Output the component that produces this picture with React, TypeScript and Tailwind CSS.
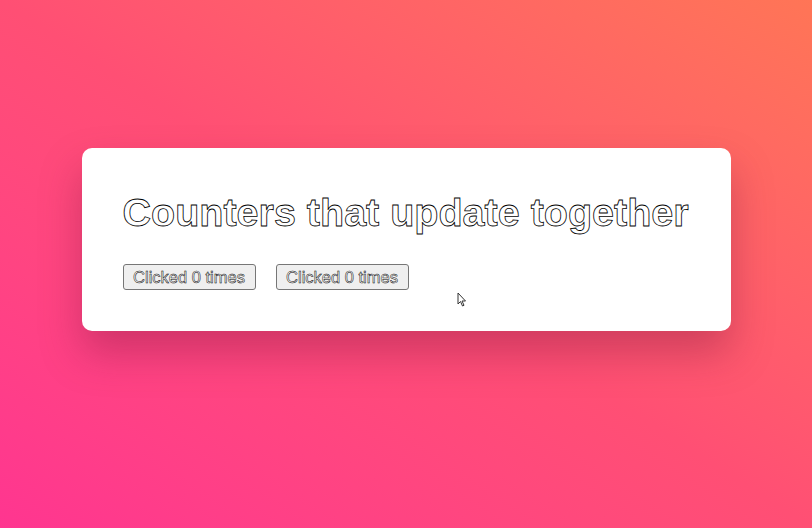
export default function App() {
  return (
    <div className="relative flex h-[528px] w-[812px] items-start justify-center overflow-hidden bg-linear-to-tr from-[#ff3590] via-[#ff4f74] to-[#ff7556] pt-[148px] font-['Liberation_Sans',Arial,sans-serif]">
      <div className="h-[183px] w-[649px] rounded-[10px] bg-white px-[41px] pt-[39px] shadow-[0_22px_40px_rgba(120,20,60,0.35)]">
        <h1 className="text-[39.5px] font-bold leading-[50px] text-white [-webkit-text-stroke:0.8px_#000]">
          Counters that update together
        </h1>
        <div className="mt-[27px] flex gap-[20px]">
          <CounterButton />
          <CounterButton />
        </div>
      </div>
      {/* mouse pointer */}
      <svg className="absolute left-[457px] top-[292px]" width="10" height="16" viewBox="0 0 10 16">
        <path d="M1 1 L1 12 L3.5 9.5 L5.5 14 L7 13.3 L5 9 L8.5 9 Z" fill="white" stroke="#333" strokeWidth="1" />
      </svg>
    </div>
  );
}

function CounterButton() {
  return (
    <button className="h-[26px] w-[133px] rounded-[3px] border border-[#767676] bg-[#efefef] text-[16.5px] leading-none text-white [-webkit-text-stroke:0.5px_#000]">
      Clicked 0 times
    </button>
  );
}
